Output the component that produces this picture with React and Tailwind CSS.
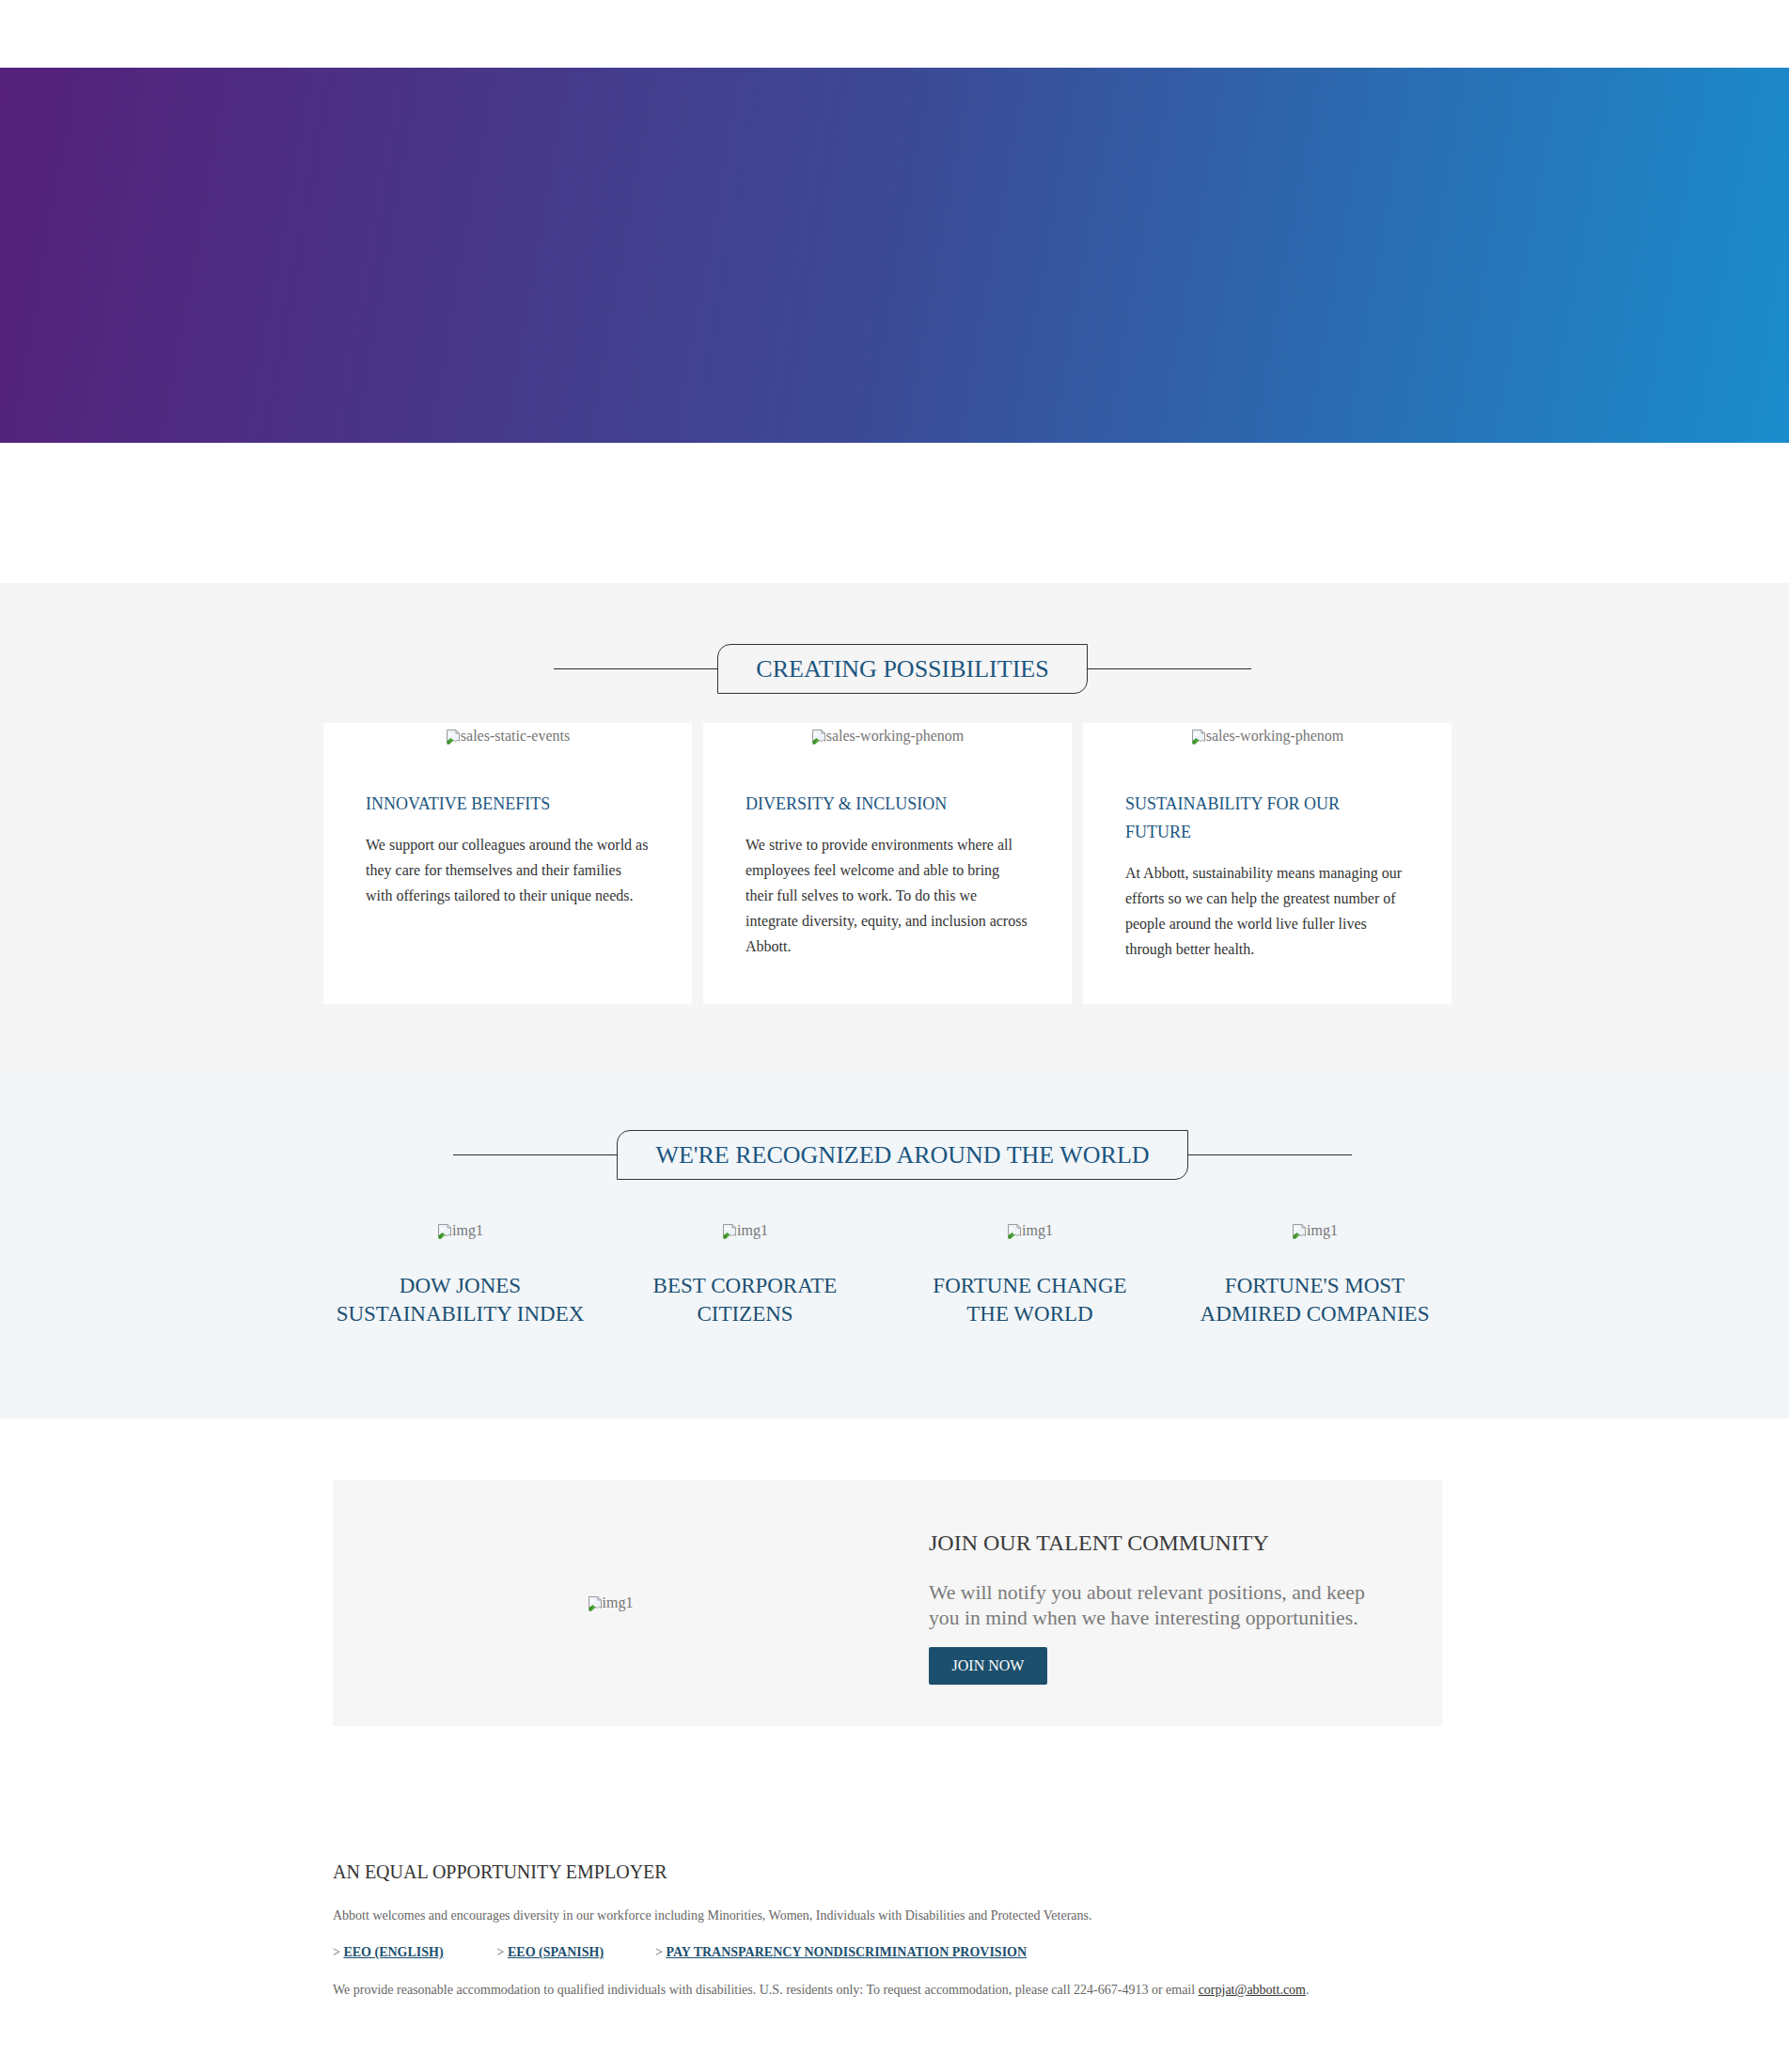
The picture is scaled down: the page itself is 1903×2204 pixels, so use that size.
const cards = [
  {
    alt: "sales-static-events",
    title: "INNOVATIVE BENEFITS",
    body: "We support our colleagues around the world as they care for themselves and their families with offerings tailored to their unique needs.",
  },
  {
    alt: "sales-working-phenom",
    title: "DIVERSITY & INCLUSION",
    body: "We strive to provide environments where all employees feel welcome and able to bring their full selves to work. To do this we integrate diversity, equity, and inclusion across Abbott.",
  },
  {
    alt: "sales-working-phenom",
    title: (
      <>
        SUSTAINABILITY FOR OUR
        <br />
        FUTURE
      </>
    ),
    body: "At Abbott, sustainability means managing our efforts so we can help the greatest number of people around the world live fuller lives through better health.",
  },
];

const awards = [
  ["DOW JONES", "SUSTAINABILITY INDEX"],
  ["BEST CORPORATE", "CITIZENS"],
  ["FORTUNE CHANGE", "THE WORLD"],
  ["FORTUNE'S MOST", "ADMIRED COMPANIES"],
];

const BrokenImage = ({ alt }) => (
  <span className="inline-flex items-end text-[16px] leading-[20px] text-[#757575]">
    <svg width="16" height="16" viewBox="0 0 16 16" className="mb-[1px] shrink-0">
      <path d="M1.5 0.5h9.5l3.5 3.5v8.5l-2-1.5-2 2-2-2-2 2-2-2-3 2z" fill="#eef3fa" stroke="#9a9a9a" />
      <path d="M11 0.5v3.5h3.5" fill="none" stroke="#9a9a9a" />
      <path d="M3 5.5c0-1 1.2-1.6 2-1 .6-.9 2.2-.6 2.2.6.8 0 1 1 .3 1.2H3.4c-.4 0-.5-.4-.4-.8z" fill="#ffffff" />
      <path d="M1.5 15.5v-3l4-3.5 3 2.5-3 3-1.5 1z" fill="#4fa53a" />
      <path d="M1.5 12.5l3-2.5v5.5h-3z" fill="#3f8f2c" />
    </svg>
    <span>{alt}</span>
  </span>
);

const SectionHeading = ({ title }) => (
  <div className="flex items-center justify-center pl-[17px]">
    <div className="h-px w-[174px] bg-[#2b2b2b]" />
    <div className="flex h-[53px] items-center rounded-tl-[14px] rounded-br-[14px] border border-[#333333] px-10 text-[26px] leading-none text-[#1b5580]">
      {title}
    </div>
    <div className="h-px w-[174px] bg-[#2b2b2b]" />
  </div>
);

export default function App() {
  return (
    <div className="min-h-[2204px] w-[1903px] bg-white font-['Liberation_Serif','Times_New_Roman',serif]">
      <div className="h-[72px]" />

      {/* hero */}
      <div className="h-[399px] bg-[linear-gradient(100deg,#55207a_0%,#3c4a96_50%,#1a8dcc_100%)]" />

      <div className="h-[149px]" />

      {/* creating possibilities */}
      <section className="bg-[#f5f5f5] pt-[65px] pb-[70px]">
        <SectionHeading title="CREATING POSSIBILITIES" />
        <div className="mt-[31px] ml-[344px] grid w-[1200px] grid-cols-3 gap-3">
          {cards.map((card, i) => (
            <div key={i} className="bg-white pb-[45px]">
              <div className="flex h-[24px] justify-center pt-[4px]">
                <BrokenImage alt={card.alt} />
              </div>
              <div className="pl-[45px] pr-[46px]">
                <h3 className="mt-[47px] text-[18px] leading-[30px] text-[#1b5580]">
                  {card.title}
                </h3>
                <p className="mt-[15px] text-[16px] leading-[27px] text-[#333333]">
                  {card.body}
                </p>
              </div>
            </div>
          ))}
        </div>
      </section>

      {/* recognized */}
      <section className="bg-[#f2f6f9] pt-[64px] pb-[96px]">
        <SectionHeading title="WE'RE RECOGNIZED AROUND THE WORLD" />
        <div className="mt-[44px] ml-[338px] grid w-[1212px] grid-cols-4">
          {awards.map((lines, i) => (
            <div key={i} className="flex flex-col items-center">
              <div className="flex h-[20px] justify-center">
                <BrokenImage alt="img1" />
              </div>
              <div className="mt-[34px] text-center text-[23px] leading-[30px] text-[#1b4f72]">
                {lines[0]}
                <br />
                {lines[1]}
              </div>
            </div>
          ))}
        </div>
      </section>

      {/* talent community */}
      <div className="mt-[65px] ml-[354px] grid h-[262px] w-[1180px] grid-cols-2 bg-[#f6f6f6]">
        <div className="flex items-center justify-center">
          <BrokenImage alt="img1" />
        </div>
        <div className="pt-[53px] pl-[44px]">
          <h2 className="text-[24px] leading-[28px] text-[#3a3a3a]">
            JOIN OUR TALENT COMMUNITY
          </h2>
          <p className="mt-[26px] max-w-[480px] text-[21.7px] leading-[27px] text-[#7a7a7a]">
            We will notify you about relevant positions, and keep you in mind when we have interesting opportunities.
          </p>
          <button className="mt-[17px] flex h-[40px] w-[126px] items-center justify-center rounded-[2px] bg-[#1c4f6d] text-[16px] text-white">
            JOIN NOW
          </button>
        </div>
      </div>

      {/* footer */}
      <footer className="ml-[354px] pt-[141px] pb-[80px]">
        <h4 className="text-[20px] leading-[28px] text-[#333333]">
          AN EQUAL OPPORTUNITY EMPLOYER
        </h4>
        <p className="mt-[23px] text-[14px] leading-[20px] text-[#666666]">
          Abbott welcomes and encourages diversity in our workforce including Minorities, Women, Individuals with Disabilities and Protected Veterans.
        </p>
        <div className="mt-[19px] flex text-[14px] leading-[20px] text-[#555555]">
          <span className="mr-[57px]">
            &gt; <a className="font-bold text-[#1b4f6e] underline">EEO (ENGLISH)</a>
          </span>
          <span className="mr-[55px]">
            &gt; <a className="font-bold text-[#1b4f6e] underline">EEO (SPANISH)</a>
          </span>
          <span>
            &gt;{" "}
            <a className="font-bold text-[#1b4f6e] underline">
              PAY TRANSPARENCY NONDISCRIMINATION PROVISION
            </a>
          </span>
        </div>
        <p className="mt-[20px] text-[14px] leading-[20px] text-[#666666]">
          We provide reasonable accommodation to qualified individuals with disabilities. U.S. residents only: To request accommodation, please call 224-667-4913 or email{" "}
          <a className="text-[#333333] underline">corpjat@abbott.com</a>.
        </p>
      </footer>
    </div>
  );
}
